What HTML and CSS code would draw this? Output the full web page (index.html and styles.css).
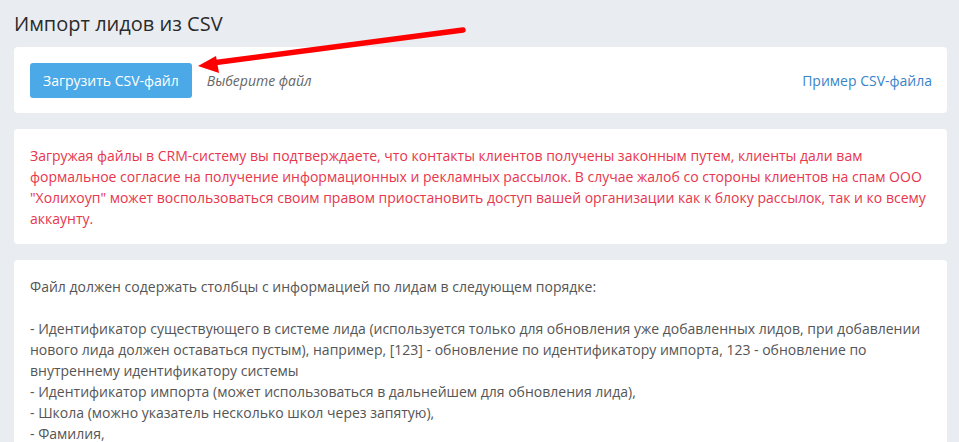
FILE: index.html
```html
<!DOCTYPE html>
<html lang="ru">
<head>
<meta charset="utf-8">
<title>Импорт лидов из CSV</title>
<link rel="stylesheet" href="styles.css">
</head>
<body>
<div class="page">
  <h1 class="title">Импорт лидов из CSV</h1>
  <div class="card upload">
    <div class="upload-left">
      <button class="btn">Загрузить CSV-файл</button>
      <span class="file-name">Выберите файл</span>
    </div>
    <a class="link" href="#">Пример CSV-файла</a>
  </div>
  <div class="card">
    <p class="warn">Загружая файлы в CRM-систему вы подтверждаете, что контакты клиентов получены законным путем, клиенты дали вам формальное согласие на получение информационных и рекламных рассылок. В случае жалоб со стороны клиентов на спам ООО "Холихоуп" может воспользоваться своим правом приостановить доступ вашей организации как к блоку рассылок, так и ко всему аккаунту.</p>
  </div>
  <div class="card">
    <p class="info">Файл должен содержать столбцы с информацией по лидам в следующем порядке:<br><br>- Идентификатор существующего в системе лида (используется только для обновления уже добавленных лидов, при добавлении нового лида должен оставаться пустым), например, [123] - обновление по идентификатору импорта, 123 - обновление по внутреннему идентификатору системы<br>- Идентификатор импорта (может использоваться в дальнейшем для обновления лида),<br>- Школа (можно указатель несколько школ через запятую),<br>- Фамилия,</p>
  </div>
</div>
<svg class="arrow" width="959" height="442" viewBox="0 0 959 442">
  <line x1="463" y1="30" x2="212" y2="63" stroke="#ff0000" stroke-width="5.5" stroke-linecap="round"/>
  <polygon points="198,66 216,56 219,73" fill="#ff0000"/>
</svg>
</body>
</html>
```
FILE: styles.css
```css
html, body {
  margin: 0;
  padding: 0;
  background: #e9edf2;
  font-family: "Open Sans", "Liberation Sans", sans-serif;
  overflow: hidden;
}
.page {
  padding: 10px 12px 0 14px;
}
.title {
  margin: 0 0 10px 0;
  font-size: 20px;
  font-weight: 400;
  line-height: 27px;
  color: #2b2b2b;
}
.card {
  background: #fff;
  border-radius: 4px;
  padding: 16px 16px 15px 16px;
  margin-bottom: 16px;
}
.upload {
  display: flex;
  align-items: center;
  justify-content: space-between;
  padding: 16px 15px 15px 16px;
}
.upload-left {
  display: flex;
  align-items: center;
  gap: 15px;
}
.btn {
  height: 35px;
  padding: 0 13px;
  border: none;
  border-radius: 3px;
  background: #4aa9e6;
  color: #fff;
  font-family: inherit;
  font-size: 14px;
}
.file-name {
  font-style: italic;
  font-size: 14px;
  color: #666;
}
.link {
  font-size: 14px;
  color: #3a84c8;
  text-decoration: none;
}
.warn, .info {
  margin: 0;
  font-size: 14px;
  line-height: 21px;
}
.warn {
  color: #e8364c;
}
.info {
  color: #555;
}
.arrow {
  position: absolute;
  left: 0;
  top: 0;
  pointer-events: none;
}
```
